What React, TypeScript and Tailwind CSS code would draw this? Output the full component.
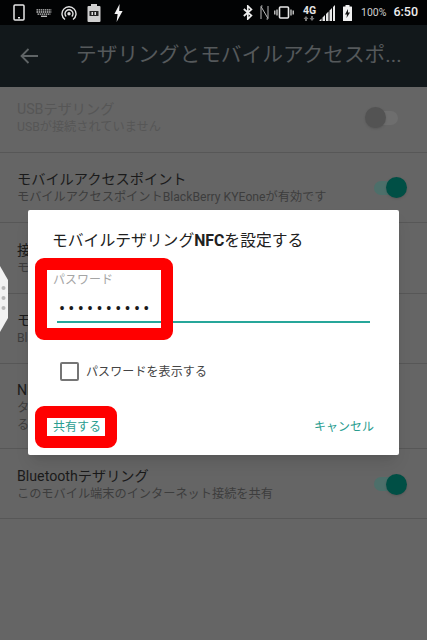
const fontStack = { fontFamily: 'Roboto, "Noto Sans CJK JP", sans-serif' };

function StatusBar() {
  return (
    <div className="flex h-[25px] items-center bg-[#020304] pl-[13px] pr-[9px] text-white">
      <svg width="12" height="17" viewBox="0 0 12 17" fill="none" className="mr-[11px]">
        <rect x="1" y="1" width="10" height="15" rx="1" stroke="#e8e8e8" strokeWidth="1.5" />
        <rect x="5" y="13" width="2" height="1.5" fill="#e8e8e8" />
      </svg>
      <svg width="16" height="8" viewBox="0 0 16 8" className="mr-[9px]" fill="none" stroke="#c4c4c4" strokeWidth="1.300">
        <path d="M0.500 0.800H15.500M0.500 3H15.500M1.500 5.200H14.500" strokeDasharray="1.500 0.600" />
        <path d="M5 7.300H11" />
      </svg>
      <svg width="16" height="16" viewBox="0 0 16 16" fill="none" stroke="#e4e4e4" strokeWidth="1.4" className="mr-[10px]">
        <path d="M4 14.5a7 7 0 1 1 8 0" />
        <path d="M5.2 11.6a4 4 0 1 1 5.6 0" />
        <circle cx="8" cy="8.8" r="1" fill="#e4e4e4" />
      </svg>
      <svg width="14" height="18" viewBox="0 0 14 18" className="mr-[13px]">
        <rect x="0.5" y="2" width="13" height="16" rx="1" fill="#cfcfcf" />
        <rect x="4" y="0" width="6" height="4" fill="#cfcfcf" />
        <rect x="2.5" y="7" width="9" height="5" fill="#222" />
        <rect x="4.5" y="8" width="1.5" height="3" fill="#ddd" />
        <rect x="7.5" y="8" width="1.5" height="3" fill="#ddd" />
      </svg>
      <svg width="9" height="18" viewBox="0 0 9 18" fill="#f4f4f4">
        <path d="M5.6 0 0.4 10h3.2L2.6 18 8.6 7H5.2z" />
      </svg>
      <div className="flex-1" />
      <svg width="10" height="15" viewBox="0 0 10 15" fill="none" stroke="#eee" strokeWidth="1.7" className="mr-[7px]">
        <path d="M0.8 4 8.4 10.6 4.8 14V1l3.6 3.4L0.8 11" />
      </svg>
      <svg width="9" height="15" viewBox="0 0 9 15" fill="none" stroke="#bbb" strokeWidth="1" className="mr-[5px]">
        <path d="M1 14V1.5L8 13.5V1" />
        <path d="M1 1h1.5M6.5 14H8" />
      </svg>
      <svg width="20" height="13" viewBox="0 0 20 13" fill="none" stroke="#e8e8e8" className="mr-[8px]">
        <rect x="5.5" y="1" width="9" height="11" rx="1" strokeWidth="1.6" />
        <path d="M3 3.5v6M0.8 4.5v4M17 3.5v6M19.2 4.5v4" strokeWidth="1.2" />
      </svg>
      <div className="mr-[2px] flex w-[15px] flex-col items-center">
        <span className="text-[10.5px] font-bold leading-[11px] text-[#e4e4e4]">4G</span>
        <svg width="12" height="5" viewBox="0 0 12 5" fill="#777">
          <path d="M3 0 5.5 3H4v2H2V3H0.5zM9 5 6.500 2H8V0h2v2h1.500z" />
        </svg>
      </div>
      <svg width="16" height="16" viewBox="0 0 16 16" fill="#e8e8e8" className="mr-[8px]">
        <path d="M0 16 2.500 13.500V16zM3.500 16V12.500L6 10V16zM7 16V9L9.500 6.500V16zM10.500 16V5.500L13 3V16zM14 16V2L16 0V16z" />
      </svg>
      <svg width="9" height="16" viewBox="0 0 9 16" className="mr-[9px]">
        <rect y="1.500" width="9" height="14.500" rx="0.500" fill="#f0f0f0" />
        <rect x="2.500" y="0" width="4" height="2" fill="#f0f0f0" />
        <path d="M5 4 2 9.500h2L3.500 13 7 7.500H5z" fill="#111" />
      </svg>
      <span className="mr-[7px] text-[10.500px] text-[#cfcfcf]">100%</span>
      <span className="text-[12.500px] font-medium text-[#eee]">6:50</span>
    </div>
  );
}

function AppBar() {
  return (
    <div className="flex h-[62px] items-center bg-[#12181b] pl-[20px]">
      <svg width="18" height="16" viewBox="0 0 18 16" fill="none" stroke="#5f6466" strokeWidth="1.800" className="mr-[38px] shrink-0">
        <path d="M18 8H1.500M8.500 1 1.500 8l7 7" />
      </svg>
      <span className="whitespace-nowrap text-[20.7px] text-[#55595b]">テザリングとモバイルアクセスポ...</span>
    </div>
  );
}

function Toggle({ on }: { on: boolean }) {
  if (on) {
    return (
      <div className="relative h-[14px] w-[24px] shrink-0 rounded-full bg-[#4d6f6a]">
        <div className="absolute right-[-9px] top-[-3.500px] h-[21px] w-[21px] rounded-full bg-[#004f45] shadow-sm" />
      </div>
    );
  }
  return (
    <div className="relative h-[14px] w-[24px] shrink-0 rounded-full bg-[#6e6e6e]">
      <div className="absolute left-[-9px] top-[-3.500px] h-[21px] w-[21px] rounded-full bg-[#535353] shadow-sm" />
    </div>
  );
}

function Row({
  title,
  sub,
  dim,
  toggle,
  className,
}: {
  title: string;
  sub: string[];
  dim?: boolean;
  toggle?: "on" | "off";
  className: string;
}) {
  return (
    <div className={`relative flex items-center border-b border-[#575757] pl-[17px] pr-[29px] ${className}`}>
      <div className="min-w-0 flex-1">
        <div className={`whitespace-nowrap text-[14.200px] leading-[20px] ${dim ? "text-[#565656]" : "text-[#1a1a1a]"}`}>{title}</div>
        {sub.map((line) => (
          <div key={line} className={`whitespace-nowrap text-[12.200px] leading-[17px] ${dim ? "text-[#565656]" : "text-[#3d3d3d]"}`}>
            {line}
          </div>
        ))}
      </div>
      {toggle && <Toggle on={toggle === "on"} />}
    </div>
  );
}

function Dialog() {
  return (
    <div className="absolute left-[28px] top-[210px] flex h-[245px] w-[371px] flex-col rounded-[2px] bg-white pl-[24px] pr-[29px] pt-[21px] shadow-lg">
      <div className="text-[15.800px] leading-[20px] text-[#212121]">
        モバイルテザリング<span className="font-bold">NFC</span>を設定する
      </div>
      <div className="mt-[21px] pl-[1px] text-[12px] leading-[16px] text-[#a5a5a5]">パスワード</div>
      <div className="ml-[7px] mt-[13px] text-[18px] leading-[16px] tracking-[3.300px] text-[#1a1a1a]">••••••••••</div>
      <div className="ml-[5px] mt-[4px] h-[2px] bg-[#26a69a]" />
      <div className="ml-[8px] mt-[39px] flex items-center">
        <div className="h-[19px] w-[19px] rounded-[2px] border-2 border-[#757575]" />
        <span className="ml-[7px] text-[12px] tracking-[0.100px] text-[#444]">パスワードを表示する</span>
      </div>
      <div className="-mr-[4px] mt-[37px] flex items-center justify-between pl-[1px] text-[12px] text-[#2a9d90]">
        <span>共有する</span>
        <span>キャンセル</span>
      </div>
      {/* red marks drawn on the screenshot */}
      <div className="absolute left-[7px] top-[48px] h-[82px] w-[138px] rounded-[9px] border-[12px] border-[#ff0000]" />
      <div className="absolute left-[7px] top-[196px] h-[42px] w-[82px] rounded-[9px] border-[12px] border-[#ff0000]" />
    </div>
  );
}

export default function App() {
  return (
    <div className="relative h-[640px] w-[427px] overflow-hidden bg-[#656565]" style={fontStack}>
      <StatusBar />
      <AppBar />
      <Row title="USBテザリング" sub={["USBが接続されていません"]} dim toggle="off" className="h-[66px] pb-[4px]" />
      <Row title="モバイルアクセスポイント" sub={["モバイルアクセスポイントBlackBerry KYEoneが有効です"]} toggle="on" className="h-[70px]" />
      <Row title="接続済みの端末" sub={["モバイルアクセスポイントの設定"]} className="h-[71px]" />
      <Row title="モバイルテザリング" sub={["BlackBerry KYEone"]} className="h-[70px]" />
      <Row title="NFCテザリング" sub={["タップしてモバイルアクセスポイントを共有す", "る"]} className="h-[85px] pt-[2px]" />
      <Row title="Bluetoothテザリング" sub={["このモバイル端末のインターネット接続を共有"]} toggle="on" className="h-[70px] pt-[1px]" />
      <svg width="9" height="66" viewBox="0 0 9 66" className="absolute left-0 top-[266px]">
        <path d="M0 0 8 14V52L0 66z" fill="#f2f2f2" />
        <circle cx="3.500" cy="22" r="2" fill="#b8b8b8" />
        <circle cx="3.500" cy="32" r="2" fill="#b8b8b8" />
        <circle cx="3.500" cy="42" r="2" fill="#b8b8b8" />
      </svg>
      <Dialog />
    </div>
  );
}
